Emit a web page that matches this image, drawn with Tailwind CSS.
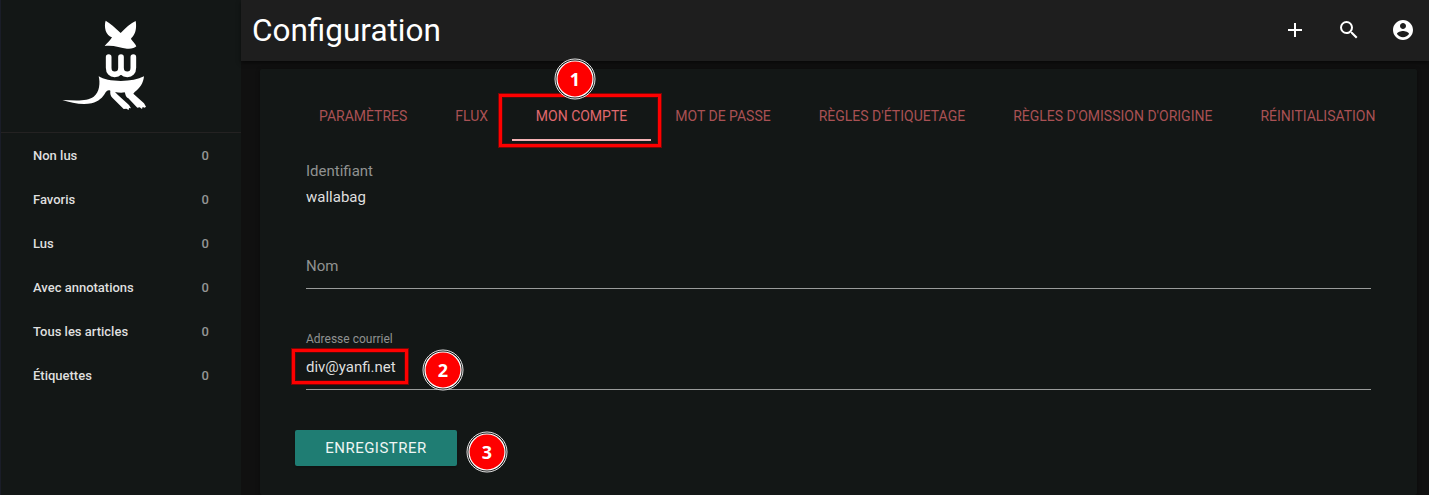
<!DOCTYPE html>
<html lang="fr">
<head>
<meta charset="utf-8">
<title>Configuration</title>
<script src="https://cdn.jsdelivr.net/npm/@tailwindcss/browser@4"></script>
</head>
<body class="relative flex h-[495px] w-[1429px] overflow-hidden bg-[#101010] font-['Roboto',sans-serif] text-[#dfdfdf]">
<aside class="h-full w-[241px] shrink-0 border-l border-[#1a1d28] bg-[#131716]">
  <div class="h-[133px] border-b border-[#242222] pt-[10px] pl-[49px]">
    <svg class="size-[110px]" viewBox="0 0 330 330" fill="#fff">
      <path d="M167 32C180 39 195 53 212 69C227 53 243 39 257 33C260 49 258 67 250 77C246 82 243 85 243 87C249 95 256 101 259 109C254 115 243 117 231 116C211 113 188 104 164 108C171 99 181 92 186 82C178 80 170 72 167 62C164 51 164 40 167 32Z"/>
      <path d="M176 141V173C176 186 183 193 194 193C206 193 213 186 213 173V141M213 173C213 186 220 193 232 193C243 193 250 186 250 173V141" fill="none" stroke="#fff" stroke-width="17" stroke-linecap="round" stroke-linejoin="round"/>
      <path d="M146 199C160 208 184 213 213 213C241 213 264 208 282 199C280 219 270 235 254 246L250 251L282 280L288 290L284 293L278 291L276 297L269 292L262 293L235 265C226 261 227 253 224 247C216 249 204 248 195 246L203 254L237 285L243 295L237 294L236 300L229 296L221 297L187 263C181 257 180 250 181 242C176 239 171 241 167 247C158 263 146 275 125 280C95 285 64 279 37 270C76 271 111 275 131 260C149 247 151 218 146 199Z"/>
    </svg>
  </div>
  <nav class="pt-px text-[13px] font-medium leading-[44px]">
    <a class="flex h-11 justify-between pr-8 pl-8"><span>Non lus</span><span class="text-[#939594]">0</span></a>
    <a class="flex h-11 justify-between pr-8 pl-8"><span>Favoris</span><span class="text-[#939594]">0</span></a>
    <a class="flex h-11 justify-between pr-8 pl-8"><span>Lus</span><span class="text-[#939594]">0</span></a>
    <a class="flex h-11 justify-between pr-8 pl-8"><span>Avec annotations</span><span class="text-[#939594]">0</span></a>
    <a class="flex h-11 justify-between pr-8 pl-8"><span>Tous les articles</span><span class="text-[#939594]">0</span></a>
    <a class="flex h-11 justify-between pr-8 pl-8"><span>Étiquettes</span><span class="text-[#939594]">0</span></a>
  </nav>
</aside>
<div class="flex min-w-0 flex-1 flex-col">
  <header class="flex h-[61px] shrink-0 items-center justify-between bg-[#1e1e1e] pr-[14px] pl-[11px] text-white shadow-[0_2px_4px_rgba(0,0,0,0.5)]">
    <h1 class="text-[31.5px] leading-[61px]">Configuration</h1>
    <div class="flex gap-[30px] pb-px">
      <svg class="size-6" viewBox="0 0 24 24" fill="currentColor"><path d="M19 13h-6v6h-2v-6H5v-2h6V5h2v6h6v2z"/></svg>
      <svg class="size-6" viewBox="0 0 24 24" fill="currentColor"><path d="M15.5 14h-.79l-.28-.27A6.471 6.471 0 0 0 16 9.500 6.500 6.500 0 1 0 9.500 16c1.610 0 3.090-.59 4.230-1.570l.27.28v.79l5 4.990L20.490 19l-4.990-5zm-6 0C7.010 14 5 11.990 5 9.500S7.010 5 9.500 5 14 7.010 14 9.500 11.990 14 9.500 14z"/></svg>
      <svg class="size-6" viewBox="0 0 24 24" fill="currentColor"><path d="M12 2C6.480 2 2 6.480 2 12s4.480 10 10 10 10-4.480 10-10S17.520 2 12 2zm0 3c1.660 0 3 1.340 3 3s-1.340 3-3 3-3-1.340-3-3 1.340-3 3-3zm0 14.200c-2.500 0-4.710-1.280-6-3.220.030-1.990 4-3.080 6-3.080 1.990 0 5.970 1.090 6 3.080-1.290 1.940-3.500 3.220-6 3.220z"/></svg>
    </div>
  </header>
  <main class="mt-2 mr-3 ml-[19px] h-[440px] rounded-[2px] bg-[#131716] pr-[18px] pl-[35px] shadow-[0_1px_4px_rgba(0,0,0,0.4)]">
    <div class="flex h-[72px] pt-6 text-[14px] leading-[46px] whitespace-nowrap text-[#a95154]">
      <a class="px-6">PARAMÈTRES</a>
      <a class="px-6">FLUX</a>
      <a class="h-12 w-[139.3px] border-b-2 border-[#f6b2b5] pr-6 pl-[23.7px] text-[#e0696e]">MON COMPTE</a>
      <a class="px-6">MOT DE PASSE</a>
      <a class="px-6">RÈGLES D'ÉTIQUETAGE</a>
      <a class="px-6">RÈGLES D'OMISSION D'ORIGINE</a>
      <a class="px-6">RÉINITIALISATION</a>
    </div>
    <form class="pr-7 pl-[11px] text-[15px]">
      <div class="pt-[17px] leading-[26px]">
        <div class="text-[#909291]">Identifiant</div>
        <div>wallabag</div>
      </div>
      <div class="mt-[34px] h-[45px] border-b border-[#9a9c9b] pt-[9px] leading-[26px] text-[#909291]">Nom</div>
      <div class="mt-[41px] h-[60px] border-b border-[#9a9c9b]">
        <div class="text-[12px] leading-[18px] text-[#909291]">Adresse courriel</div>
        <div class="pt-[6px] leading-[26px]">div@yanfi.net</div>
      </div>
      <button type="button" class="mt-10 -ml-[11px] block h-9 w-[162px] rounded-[2px] bg-[#1f7d73] text-[15px] leading-9 tracking-[0.5px] text-[#eef5f4] shadow-[0_2px_2px_rgba(0,0,0,0.2)]">ENREGISTRER</button>
    </form>
  </main>
</div>
<div class="absolute top-[94px] left-[499px] h-[53px] w-[162px] border-[3px] border-[#fe0000] shadow-[0_0_0_1px_#780606,inset_0_0_0_1px_#450e0e]"></div>
<div class="absolute top-[349px] left-[292px] h-[35px] w-[116px] border-[3px] border-[#fe0000] shadow-[0_0_0_1px_#780606,inset_0_0_0_1px_#450e0e]"></div>
<svg class="absolute inset-0" width="1429" height="495" font-family="'Noto Sans',sans-serif" font-weight="700" font-size="18" text-anchor="middle">
  <g fill="#111" stroke="#e8e8e8"><circle cx="575" cy="79" r="20"/><circle cx="443" cy="370" r="20"/><circle cx="487" cy="452" r="20"/></g>
  <g fill="#fe0000" stroke="#fff" stroke-width="1.200"><circle cx="575" cy="79" r="18"/><circle cx="443" cy="370" r="18"/><circle cx="487" cy="452" r="18"/></g>
  <g fill="#fff"><text x="575" y="86">1</text><text x="443" y="377">2</text><text x="487" y="459">3</text></g>
</svg>
</body>
</html>
